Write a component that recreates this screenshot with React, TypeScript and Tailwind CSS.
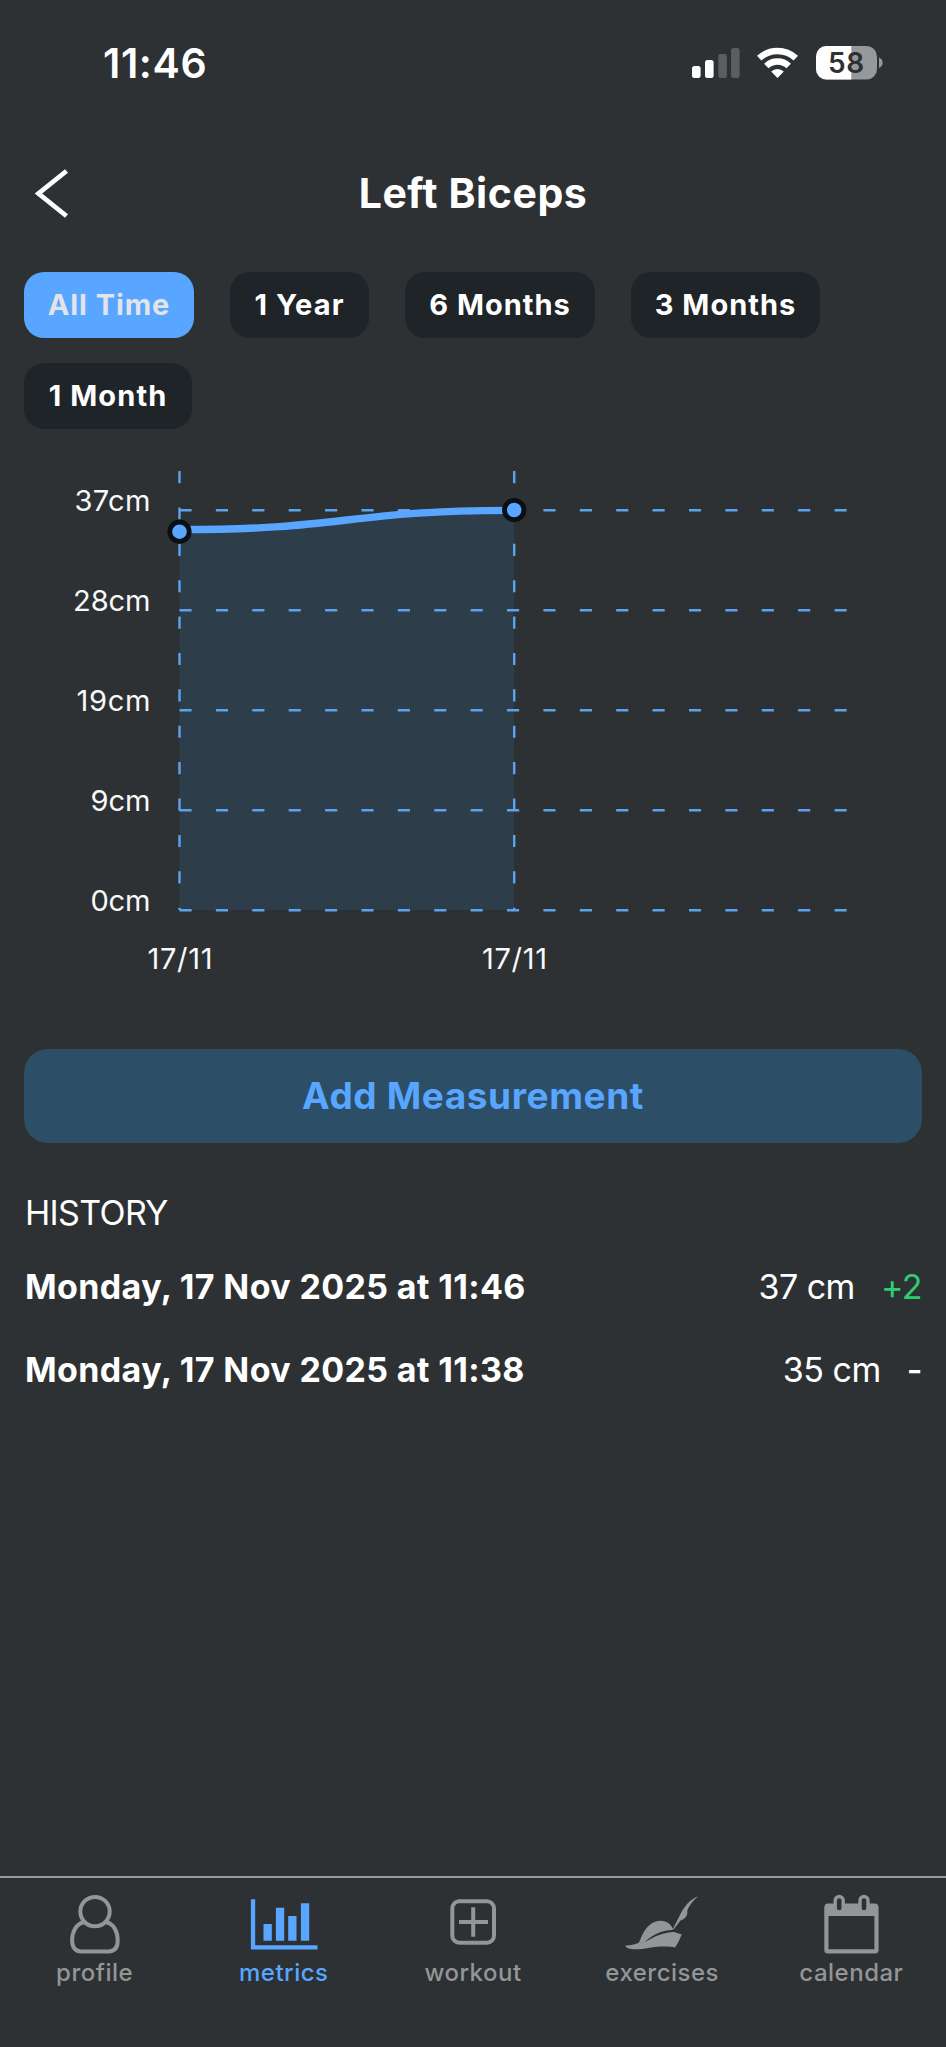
import React from "react";

const ranges = [
  { label: "All Time", className: "w-[170px] bg-[#58a6ff] text-[#e1e4e8] tracking-[0.9px]" },
  { label: "1 Year", className: "w-[139px] bg-[#1f2428] text-white tracking-[1.1px]" },
  { label: "6 Months", className: "w-[190px] bg-[#1f2428] text-white tracking-[1px]" },
  { label: "3 Months", className: "w-[189px] bg-[#1f2428] text-white tracking-[1px]" },
  { label: "1 Month", className: "w-[168px] bg-[#1f2428] text-white tracking-[1.1px]" },
];
const gridRows = [
  { label: "37cm", y: 510, width: 75 },
  { label: "28cm", y: 610, width: 76.5 },
  { label: "19cm", y: 710, width: 73 },
  { label: "9cm", y: 810, width: 59 },
  { label: "0cm", y: 910, width: 59 },
];
const history = [
  { date: "Monday, 17 Nov 2025 at 11:46", value: "37 cm", change: "+2", changeClass: "text-[#2ecc71]" },
  { date: "Monday, 17 Nov 2025 at 11:38", value: "35 cm", change: "-", changeClass: "text-white font-medium" },
];

function StatusBar() {
  return (
    <div className="flex h-[126px] items-start justify-between pl-[103px] pr-[63px]">
      <span className="mt-[38px] text-[41px] leading-[50px] font-semibold tracking-[0.6px]">11:46</span>
      <svg className="mt-[44px]" width="192" height="38" viewBox="691 44 192 38">
        <g fill="#fff">
          <rect x="692" y="66" width="8.6" height="12" rx="2.5" />
          <rect x="705" y="60" width="8.6" height="18" rx="2.5" />
          <rect x="718.3" y="54" width="8.6" height="24" rx="2.5" opacity=".22" />
          <rect x="731" y="48" width="8.6" height="30" rx="2.5" opacity=".22" />
        </g>
        <g fill="none" stroke="#fff" strokeWidth="6.4">
          <path d="M759.2 58.2a26.8 26.8 0 0 1 36.6 0" />
          <path d="M766.3 66a16.2 16.2 0 0 1 22.4 0" />
        </g>
        <path d="M777.5 78l-6.3-6.4a9 9 0 0 1 12.6 0z" fill="#fff" />
        <clipPath id="battery"><rect x="816" y="46" width="61" height="33.5" rx="10.5" /></clipPath>
        <g clipPath="url(#battery)">
          <rect x="816" y="46" width="61" height="34" fill="#96989a" />
          <rect x="816" y="46" width="35.3" height="34" fill="#fff" />
        </g>
        <path d="M879 57.5q3.6 1.6 3.6 5.2t-3.6 5.2z" fill="#96989a" />
        <text x="846.3" y="73" textAnchor="middle" fontSize="28" fontWeight="600" letterSpacing=".6" fill="#2d3133">58</text>
      </svg>
    </div>
  );
}

function Chart() {
  return (
    <svg width="946" height="570" viewBox="0 450 946 570" className="block">
      <path d="M179.5 529.7C346.75 529.7 346.75 510 514 510V910H179.5Z" fill="#2d3d49" />
      <g stroke="#5ba3ed" strokeWidth="2.43" strokeDasharray="12.13 24.26">
        {gridRows.map((r) => <path key={r.y} d={`M179.5 ${r.y + 0.2}H848`} />)}
        <path d="M179.5 471V910M514.2 471V910" />
      </g>
      <path d="M179.5 529.7C346.75 529.7 346.75 510.3 514 510.3" fill="none" stroke="#58a6ff" strokeWidth="7.3" />
      <g fill="#58a6ff" stroke="#090f14" strokeWidth="4.85">
        <circle cx="179.5" cy="531.7" r="9.7" />
        <circle cx="514.2" cy="510" r="9.7" />
      </g>
      <g fill="#f8f9fa" fontSize="29.1">
        {gridRows.map((r) => (
          <text key={r.y} x="150.5" y={r.y + 0.8} textAnchor="end" textLength={r.width + 1}>{r.label}</text>
        ))}
        <text x="180" y="968.5" textAnchor="middle" textLength="65">17/11</text>
        <text x="514.5" y="968.5" textAnchor="middle" textLength="65">17/11</text>
      </g>
    </svg>
  );
}

const tabs = [
  {
    name: "profile",
    icon: (
      <g fill="none" stroke="currentColor" strokeWidth="4">
        <circle cx="36" cy="19.6" r="14.7" />
        <path d="M25 30.2C17 31.5 13.1 40 13.1 48.5C13.1 55.500 16.500 59.400 22.500 59.400H49.500C55.500 59.400 58.700 55.500 58.700 48.500C58.700 40 55 31.500 47 30.200" />
      </g>
    ),
  },
  {
    name: "metrics",
    icon: (
      <path fill="currentColor" d="M2.9 7.3H7.2V53.2H69.5V57.5H2.9ZM15.5 32h8.3v16.7h-8.3ZM27.9 15.7h8.3v33h-8.3ZM40.2 24h8.3v24.7h-8.3ZM52.9 11.3h8.3v37.4h-8.3Z" />
    ),
  },
  {
    name: "workout",
    icon: (
      <g fill="none" stroke="currentColor" strokeWidth="4">
        <rect x="15.3" y="9.3" width="41.7" height="41.4" rx="7" />
        <path d="M22 30H51M36.2 15.3V44.7" />
      </g>
    ),
  },
  {
    name: "exercises",
    icon: (
      <g fill="currentColor">
        <path d="M12.5 51.5C15 46 16 42 19.5 37.5C23.5 32 28 29 34 28.7C41 28.5 45 32 47.3 37.8C36 38.5 28 42 18.5 50Z" />
        <path d="M-1 53.6C5 53.8 10 52 14 50.500L18 50C27 46.500 31 41.500 46.800 40C50 40 52 42 55.800 42.300Q53 50 49.100 55.500C43 54 33 54 23.500 55.700C17 57 12 57.500 6.800 57.300C3 57 0 56 -1 53.600Z" />
        <path d="M46.800 37L54 23C58 14.500 64 7.500 72.300 4.300C66.500 9 63 14 61.300 18.500C61.800 23 60 26.500 54.500 28.500L48 37Z" />
      </g>
    ),
  },
  {
    name: "calendar",
    icon: (
      <g>
        <path fill="currentColor" fillRule="evenodd" d="M13 11.6H59.5Q63.6 11.6 63.6 16V58Q63.6 61.5 60 61.5H13Q9.3 61.5 9.3 58V16Q9.3 11.6 13 11.6ZM13.5 24V57.3H59.4V24Z" />
        <g fill="#2d3133" stroke="currentColor" strokeWidth="3.4">
          <rect x="20.2" y="4.5" width="8" height="15.5" rx="4" />
          <rect x="45" y="4.5" width="8" height="15.5" rx="4" />
        </g>
      </g>
    ),
  },
];

export default function App() {
  return (
    <div className="flex h-[2047px] w-[946px] flex-col overflow-hidden bg-[#2d3133] font-['Inter','Liberation_Sans',sans-serif] text-white">
      <StatusBar />
      <header className="grid h-[134px] grid-cols-[100px_1fr_100px] items-center">
        <svg className="ml-[33px]" width="36" height="50" viewBox="34 167 36 50">
          <path d="M67.5 170L39.5 192.5L67.5 215" fill="none" stroke="#fff" strokeWidth="4.8" />
        </svg>
        <h1 className="text-center text-[41px] leading-[50px] font-bold tracking-[0.55px]">Left Biceps</h1>
      </header>
      <div className="flex h-[190px] flex-wrap content-start gap-x-9 gap-y-[25px] px-6 pt-3">
        {ranges.map((r) => (
          <button key={r.label} className={`h-[66px] rounded-[20px] text-[29px] font-bold whitespace-nowrap ${r.className}`}>
            {r.label}
          </button>
        ))}
      </div>
      <Chart />
      <main className="flex flex-1 flex-col px-6 pt-[29px]">
        <button className="h-[94px] w-full rounded-[24px] bg-[#2d4e67] text-[37px] font-bold tracking-[0.6px] text-[#58a6ff]">
          Add Measurement
        </button>
        <h2 className="mt-[49px] pl-px text-[34px] leading-[42px] font-normal tracking-[-0.65px]">HISTORY</h2>
        <ul className="mt-[11px] flex flex-col pl-px">
          {history.map((h) => (
            <li key={h.date} className="flex h-[83px] items-center justify-between">
              <span className="text-[34px] font-bold tracking-[0.37px]">{h.date}</span>
              <span className="flex gap-[26px] text-[34px] tracking-[-0.5px]">
                <span>{h.value}</span>
                <span className={h.changeClass}>{h.change}</span>
              </span>
            </li>
          ))}
        </ul>
      </main>
      <nav className="grid h-[171px] grid-cols-5 border-t-2 border-[#97999a] pt-[14px]">
        {tabs.map((t) => (
          <div key={t.name} className={`flex flex-col items-center ${t.name === "metrics" ? "text-[#58a6ff]" : "text-[#939597]"}`}>
            <svg width="72" height="64" viewBox="0 0 72 64" className="overflow-visible">{t.icon}</svg>
            <span className="mt-[2px] text-[24px] leading-[30px] font-medium tracking-[0.5px]">{t.name}</span>
          </div>
        ))}
      </nav>
    </div>
  );
}
